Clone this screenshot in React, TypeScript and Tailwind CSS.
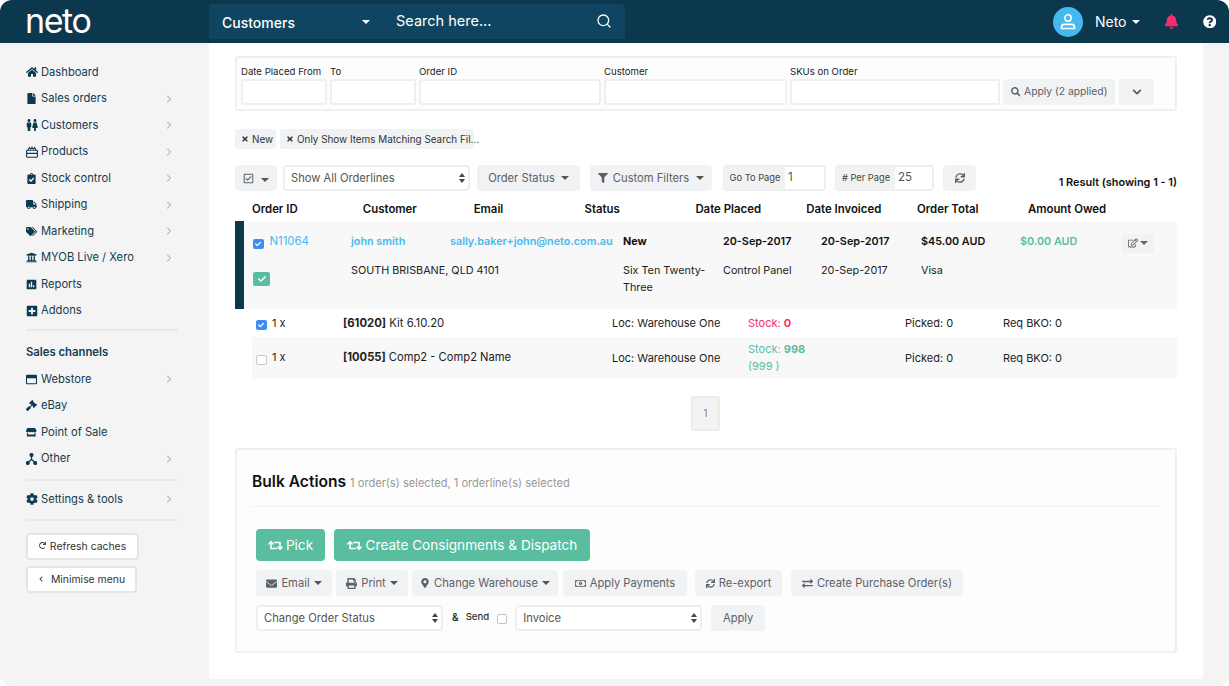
import React from "react";
import {
  FaHome, FaFile, FaMale, FaFemale, FaClipboardCheck, FaTruck, FaTags, FaUniversity, FaPoll, FaPlusSquare,
  FaRegWindowMaximize, FaGavel, FaStore, FaCog, FaRetweet, FaEnvelope, FaPrint, FaMapMarkerAlt, FaRegMoneyBillAlt,
  FaSync, FaExchangeAlt, FaFilter, FaSearch, FaCheck, FaChevronDown, FaTimes, FaRegCheckSquare, FaRegEdit,
  FaRedo, FaChevronLeft, FaQuestionCircle, FaBell,
} from "react-icons/fa";
import { ChevronRight, Search } from "lucide-react";

const Caret = ({ c = "border-t-[#555]" }: { c?: string }) => (
  <span className={`inline-block w-0 h-0 border-x-[4px] border-x-transparent border-t-[4px] ${c}`} />
);

const Updown = () => (
  <span className="flex flex-col gap-[2px]">
    <span className="w-0 h-0 border-x-[3px] border-x-transparent border-b-[4px] border-b-[#444]" />
    <span className="w-0 h-0 border-x-[3px] border-x-transparent border-t-[4px] border-t-[#444]" />
  </span>
);

const OtherIcon = () => (
  <svg width="11" height="12" viewBox="0 0 11 12" fill="none" stroke="#0c3a50" strokeWidth="1.3">
    <circle cx="5.5" cy="2" r="1.4" fill="#0c3a50" />
    <circle cx="1.8" cy="10" r="1.4" fill="#0c3a50" />
    <circle cx="9.2" cy="10" r="1.4" fill="#0c3a50" />
    <path d="M5.5 3v3.5M5.5 6.5L2.4 9M5.5 6.5L8.6 9" />
  </svg>
);

const ProductsIcon = () => (
  <svg width="12" height="12" viewBox="0 0 12 12" fill="none" stroke="#0c3a50" strokeWidth="1.1">
    <rect x="0.6" y="4.2" width="10.8" height="7" rx="0.8" />
    <path d="M0.6 7.4h10.8" />
    <path d="M2.4 4.2a1.4 1.4 0 0 1 2.4-1.4a1.4 1.4 0 0 1 2.4 0a1.4 1.4 0 0 1 2.4 1.4" />
    <path d="M3.4 1v1M6 0.6v1.4M8.6 1v1" />
  </svg>
);

const Nav = ({ icon, label, arrow }: { icon: React.ReactNode; label: string; arrow?: boolean }) => (
  <div className="h-[26.5px] flex items-center text-[11.2px] text-[#123c50]">
    <span className="w-[15px] shrink-0 flex justify-start text-[12px] text-[#0c3a50]">{icon}</span>
    <span>{label}</span>
    {arrow && <ChevronRight size={12} strokeWidth={1.5} className="ml-auto mr-[3px] text-[#777c80]" />}
  </div>
);

const Divider = () => <div className="h-[2px] bg-[#e8e8e8]" />;

const Field = ({ label, w }: { label: string; w: string }) => (
  <div className={`flex flex-col ${w}`}>
    <span className="text-[9.6px] leading-[14px] pt-[1px] text-[#222] h-[15px] whitespace-nowrap">{label}</span>
    <input className="h-[26px] w-full bg-white border-2 border-[#efefef] rounded-[3px]" />
  </div>
);

const Chip = ({ label, w }: { label: string; w: string }) => (
  <span className={`${w} h-[20px] bg-[#f1f2f3] rounded-[3px] flex items-center pl-[6px] gap-[3px] text-[9.9px] text-[#333] whitespace-nowrap`}>
    <FaTimes className="text-[8px] text-[#333] shrink-0" />
    {label}
  </span>
);

const GreyBtn = ({ children, w, h = "h-[26px]" }: { children: React.ReactNode; w: string; h?: string }) => (
  <button className={`${w} ${h} shrink-0 bg-[#f1f2f4] rounded-[4px] flex items-center justify-center gap-[4px] text-[11.2px] text-[#5d6164] whitespace-nowrap`}>
    {children}
  </button>
);

const InputGroup = ({ label, value, w, lw }: { label: string; value: string; w: string; lw: string }) => (
  <div className={`${w} h-[26px] flex border-2 border-[#efefef] rounded-[4px] overflow-hidden`}>
    <span className={`${lw} bg-[#f2f2f2] flex items-center justify-center text-[9.3px] text-[#444] whitespace-nowrap`}>{label}</span>
    <span className="flex-1 bg-white flex items-center pl-[3px] text-[11.5px] text-[#555]">{value}</span>
  </div>
);

const Check = ({ on }: { on?: boolean }) =>
  on ? (
    <span className="block w-[10.5px] h-[10.5px] rounded-[2px] bg-[#3d8df5] flex items-center justify-center">
      <FaCheck className="text-[6px] text-white" />
    </span>
  ) : (
    <span className="block w-[10.5px] h-[10.5px] rounded-[2px] bg-white border border-[#c9c9c9]" />
  );

const Select = ({ label, w }: { label: string; w: string }) => (
  <div className={`${w} h-[26px] shrink-0 bg-white border-2 border-[#efefef] rounded-[4px] flex items-center justify-between pl-[6px] pr-[3px] text-[11.2px] text-[#555]`}>
    {label}
    <Updown />
  </div>
);

const heads = ["Order ID", "Customer", "Email", "Status", "Date Placed", "Date Invoiced", "Order Total", "Amount Owed"];

export default function App() {
  return (
    <div className="w-[1229px] h-[686px] bg-white overflow-hidden" style={{ fontFamily: "Inter, 'Liberation Sans', sans-serif" }}>
      <div className="w-full h-full rounded-[12px] overflow-hidden bg-[#f4f4f4] flex flex-col">
        {/* Header */}
        <header className="h-[43px] shrink-0 bg-[#0b384d] flex items-start relative">
          <div className="w-[209px] h-[43px] pl-[25px] flex items-center">
            <span className="text-[34px] leading-[35px] font-normal text-white tracking-[-1.4px] -mt-[3px]">neto</span>
          </div>
          <div className="w-[416px] h-[35px] mt-[4px] bg-[#0f4560] rounded-[3px] flex items-center text-white">
            <span className="w-[187px] pl-[13px] pt-[1px] text-[14px] font-medium flex items-center justify-between pr-[26px]">
              Customers
              <span className="inline-block w-0 h-0 border-x-[4px] border-x-transparent border-t-[4px] border-t-white" />
            </span>
            <span className="text-[14.5px] -mt-[2px]">Search here...</span>
            <Search size={16} strokeWidth={2} className="ml-auto mr-[13px] text-white -mt-[1px]" />
          </div>
          <div className="ml-auto h-[43px] flex items-center text-white">
            <span className="w-[30px] h-[30px] rounded-full bg-[#45b8f0] flex items-center justify-center">
              <svg width="18" height="18" viewBox="0 0 18 18" fill="none" stroke="white" strokeWidth="1.6">
                <circle cx="9" cy="5" r="3.2" />
                <path d="M2.5 15.5v-1.5c0-1.6 1.5-2.6 3-2.6h7c1.5 0 3 1 3 2.6v1.5z" />
              </svg>
            </span>
            <span className="ml-[12px] text-[14px]">Neto</span>
            <span className="ml-[5px] w-0 h-0 border-x-[4px] border-x-transparent border-t-[4px] border-t-white" />
            <FaBell className="ml-[24px] text-[15px] text-[#f62d6c]" />
            <FaQuestionCircle className="ml-[24px] mr-[13px] text-[13.5px] text-white" />
          </div>
        </header>

        <div className="flex-1 flex min-h-0">
          {/* Sidebar */}
          <aside className="w-[209px] shrink-0 pt-[16px] pl-[26px] pr-[31px]">
            <Nav icon={<FaHome />} label="Dashboard" />
            <Nav icon={<FaFile className="text-[11px]" />} label="Sales orders" arrow />
            <Nav icon={<span className="flex"><FaMale className="-mx-[3px] text-[12px]" /><FaFemale className="-mx-[3px] text-[12px]" /></span>} label="Customers" arrow />
            <Nav icon={<ProductsIcon />} label="Products" arrow />
            <Nav icon={<FaClipboardCheck className="text-[11px]" />} label="Stock control" arrow />
            <Nav icon={<FaTruck className="text-[11px]" />} label="Shipping" arrow />
            <Nav icon={<FaTags className="text-[11px]" />} label="Marketing" arrow />
            <Nav icon={<FaUniversity className="text-[11px]" />} label="MYOB Live / Xero" arrow />
            <Nav icon={<FaPoll className="text-[11px]" />} label="Reports" />
            <Nav icon={<FaPlusSquare className="text-[12px]" />} label="Addons" />
            <div className="mt-[5px]"><Divider /></div>
            <div className="mt-[14px] h-[14px] leading-[14px] text-[11.3px] font-semibold text-[#123c50]">Sales channels</div>
            <div className="mt-[7px]">
              <Nav icon={<FaRegWindowMaximize className="text-[11px]" />} label="Webstore" arrow />
              <Nav icon={<FaGavel className="text-[11px]" />} label="eBay" />
              <Nav icon={<FaStore className="text-[10.5px]" />} label="Point of Sale" />
              <Nav icon={<OtherIcon />} label="Other" arrow />
            </div>
            <div className="mt-[7px]"><Divider /></div>
            <div className="mt-[5px]"><Nav icon={<FaCog />} label="Settings & tools" arrow /></div>
            <div className="mt-[6px]"><Divider /></div>
            <button className="mt-[12px] w-[113px] h-[27px] pt-[1px] bg-white border-2 border-[#e5e5e5] rounded-[4px] flex items-center justify-center gap-[4px] text-[10.4px] text-[#333]">
              <FaRedo className="text-[7px] text-[#444] -mt-[2px]" />
              Refresh caches
            </button>
            <button className="mt-[6px] w-[111px] h-[27px] pt-[1px] bg-white border-2 border-[#e5e5e5] rounded-[4px] flex items-center justify-center gap-[7px] text-[10.4px] text-[#333]">
              <FaChevronLeft className="text-[6px] text-[#444] -mt-[2px]" />
              Minimise menu
            </button>
          </aside>

          {/* Main */}
          <main className="w-[994px] h-[636px] shrink-0 bg-white rounded-b-[3px] pt-[13px] px-[26px]">
            {/* Filters */}
            <div className="h-[55px] bg-[#fdfdfd] border-2 border-[#f0f0f0] rounded-[3px] flex items-start gap-[3px] pl-[4px] pt-[6px]">
              <Field label="Date Placed From" w="w-[86px]" />
              <Field label="To" w="w-[86px]" />
              <Field label="Order ID" w="w-[182px]" />
              <Field label="Customer" w="w-[183px]" />
              <Field label="SKUs on Order" w="w-[210px]" />
              <div className="pt-[15px] flex gap-[4px]">
                <GreyBtn w="w-[112px]"><FaSearch className="text-[9.5px]" /><span className="text-[10.3px]">Apply (2 applied)</span></GreyBtn>
                <GreyBtn w="w-[35px]"><FaChevronDown className="text-[10px] text-[#555]" /></GreyBtn>
              </div>
            </div>

            {/* Chips */}
            <div className="mt-[18px] flex gap-[4px]">
              <Chip label="New" w="w-[41px]" />
              <Chip label="Only Show Items Matching Search Fil..." w="w-[194px]" />
            </div>

            {/* Toolbar */}
            <div className="mt-[16px] h-[26px] flex items-center">
              <GreyBtn w="w-[42px]"><FaRegCheckSquare className="text-[11px]" /><span className="ml-[3px]"><Caret /></span></GreyBtn>
              <div className="ml-[6px]"><Select label="Show All Orderlines" w="w-[187px]" /></div>
              <div className="ml-[7px]"><GreyBtn w="w-[103px]"><span className="mr-[2px]">Order Status</span><Caret /></GreyBtn></div>
              <div className="ml-[10px]"><GreyBtn w="w-[122px]"><FaFilter className="text-[10px] mr-[1px]" /><span className="mr-[3px]">Custom Filters</span><Caret /></GreyBtn></div>
              <div className="ml-[11px]"><InputGroup label="Go To Page" value="1" w="w-[103px]" lw="w-[60px]" /></div>
              <div className="ml-[9px]"><InputGroup label="# Per Page" value="25" w="w-[99px]" lw="w-[58px]" /></div>
              <div className="ml-[9px]"><GreyBtn w="w-[33px]"><FaSync className="text-[10px]" /></GreyBtn></div>
              <span className="ml-auto mt-[8px] text-[10.9px] font-semibold text-[#111]">1 Result (showing 1 - 1)</span>
            </div>

            {/* Table head */}
            <div className="mt-[8px] h-[22px] pl-[17px] grid grid-cols-[repeat(8,110.85px)] items-center text-[11.4px] font-semibold text-[#111]">
              {heads.map((h) => (
                <span key={h}>{h}</span>
              ))}
            </div>

            {/* Order block */}
            <div className="h-[88px] flex">
              <div className="w-[9px] bg-[#0b384d]" />
              <div className="flex-1 bg-[#f8f8f8] pl-[9px] text-[10.8px] text-[#222]">
                <div className="h-[41px] pt-[1px] grid grid-cols-[98px_99px_173px_100px_98px_100px_99px_102px_1fr] items-center">
                  <span className="flex items-center gap-[6px]">
                    <span className="mt-[4px]"><Check on /></span>
                    <span className="text-[#4ab9ee] text-[11.4px] -mt-[1px]">N11064</span>
                  </span>
                  <span className="text-[#4ab9ee] font-semibold">john smith</span>
                  <span className="text-[#4ab9ee] font-semibold whitespace-nowrap">sally.baker+john@neto.com.au</span>
                  <span className="font-bold text-[#111]">New</span>
                  <span className="font-semibold text-[#111]">20-Sep-2017</span>
                  <span className="font-semibold text-[#111]">20-Sep-2017</span>
                  <span className="font-semibold text-[#111]">$45.00 AUD</span>
                  <span className="font-semibold text-[#58be9f]">$0.00 AUD</span>
                  <span className="w-[32px] h-[19px] bg-[#f1f2f4] rounded-[3px] flex items-center justify-center gap-[2px] mt-[2px]">
                    <FaRegEdit className="text-[10px] text-[#666]" />
                    <Caret c="border-t-[#666]" />
                  </span>
                </div>
                <div className="grid grid-cols-[98px_272px_100px_98px_100px_99px] leading-[17px]">
                  <span className="pt-[10px]">
                    <span className="w-[17px] h-[14px] rounded-[2px] bg-[#58be9f] flex items-center justify-center">
                      <FaCheck className="text-[8px] text-white" />
                    </span>
                  </span>
                  <span>SOUTH BRISBANE, QLD 4101</span>
                  <span className="pr-[8px]">Six Ten Twenty-Three</span>
                  <span>Control Panel</span>
                  <span>20-Sep-2017</span>
                  <span>Visa</span>
                </div>
              </div>
            </div>

            {/* Lines */}
            <div className="ml-[17px] text-[11px] text-[#222]">
              <div className="h-[28px] pl-[4px] grid grid-cols-[16px_71px_269px_136px_157px_98px_1fr] items-center">
                <span className="mt-[4px]"><Check on /></span>
                <span>1 x</span>
                <span className="text-[11.3px]"><b className="font-bold">[61020]</b> Kit 6.10.20</span>
                <span>Loc: Warehouse One</span>
                <span className="text-[#f62d6c]">Stock: <b className="font-bold">0</b></span>
                <span>Picked: 0</span>
                <span>Req BKO: 0</span>
              </div>
              <div className="h-[42px] pl-[4px] bg-[#f8f8f8] grid grid-cols-[16px_71px_269px_136px_157px_98px_1fr] items-center">
                <span className="mt-[4px]"><Check /></span>
                <span className="-mt-[2px]">1 x</span>
                <span className="-mt-[2px] text-[11.2px]"><b className="font-bold">[10055]</b> Comp2 - Comp2 Name</span>
                <span>Loc: Warehouse One</span>
                <span className="text-[#58be9f] leading-[17px]">Stock: <b className="font-bold">998</b><br />(999 )</span>
                <span>Picked: 0</span>
                <span>Req BKO: 0</span>
              </div>
            </div>

            {/* Pager */}
            <div className="mt-[17px] flex justify-center">
              <span className="ml-[-1px] w-[29px] h-[35px] bg-[#f3f3f3] border-2 border-[#ececec] rounded-[2px] flex items-center justify-center text-[10.5px] text-[#888]">1</span>
            </div>

            {/* Bulk */}
            <section className="mt-[17px] h-[205px] bg-[#fdfdfd] border-2 border-[#f0f0f0] rounded-[3px] pl-[15px] pr-[15px]">
              <div className="h-[57px] border-b border-[#f0f0f0] flex items-baseline pt-[22px]">
                <span className="text-[15.6px] font-semibold text-[#111] leading-[20px]">Bulk Actions</span>
                <span className="ml-[4px] text-[11.1px] text-[#999]">1 order(s) selected, 1 orderline(s) selected</span>
              </div>
              <div className="pl-[4px] pt-[22px]">
                <div className="flex gap-[9px]">
                  <button className="w-[69px] h-[32px] pt-[1px] bg-[#58be9f] rounded-[4px] flex items-center justify-center gap-[3px] text-white text-[13.6px]"><FaRetweet className="text-[15px]" />Pick</button>
                  <button className="w-[256px] h-[32px] pt-[1px] bg-[#58be9f] rounded-[4px] flex items-center justify-center gap-[4px] text-white text-[13.6px]"><FaRetweet className="text-[15px]" />Create Consignments &amp; Dispatch</button>
                </div>
                <div className="mt-[9px] flex">
                  <GreyBtn w="w-[76px]"><FaEnvelope className="text-[11px]" />Email<Caret /></GreyBtn>
                  <div className="ml-[4px]"><GreyBtn w="w-[72px]"><FaPrint className="text-[11px]" />Print<Caret /></GreyBtn></div>
                  <div className="ml-[4px]"><GreyBtn w="w-[146px]"><FaMapMarkerAlt className="text-[10px]" />Change Warehouse<Caret /></GreyBtn></div>
                  <div className="ml-[5px]"><GreyBtn w="w-[124px]"><FaRegMoneyBillAlt className="text-[11px]" />Apply Payments</GreyBtn></div>
                  <div className="ml-[8px]"><GreyBtn w="w-[87px]"><FaSync className="text-[9px]" />Re-export</GreyBtn></div>
                  <div className="ml-[9px]"><GreyBtn w="w-[172px]"><FaExchangeAlt className="text-[11px]" />Create Purchase Order(s)</GreyBtn></div>
                </div>
                <div className="mt-[9px] flex items-center">
                  <Select label="Change Order Status" w="w-[187px]" />
                  <span className="ml-[9px] text-[10px] font-semibold text-[#333] -mt-[1px]">&amp;</span>
                  <span className="ml-[7px] text-[9.6px] font-medium text-[#333] -mt-[1px]">Send</span>
                  <span className="ml-[8px] mt-[2px]"><span className="block w-[10px] h-[10px] rounded-[2px] bg-white border border-[#c0c0c0]" /></span>
                  <div className="ml-[8px]"><Select label="Invoice" w="w-[187px]" /></div>
                  <div className="ml-[9px]"><GreyBtn w="w-[54px]">Apply</GreyBtn></div>
                </div>
              </div>
            </section>
          </main>
        </div>
      </div>
    </div>
  );
}
